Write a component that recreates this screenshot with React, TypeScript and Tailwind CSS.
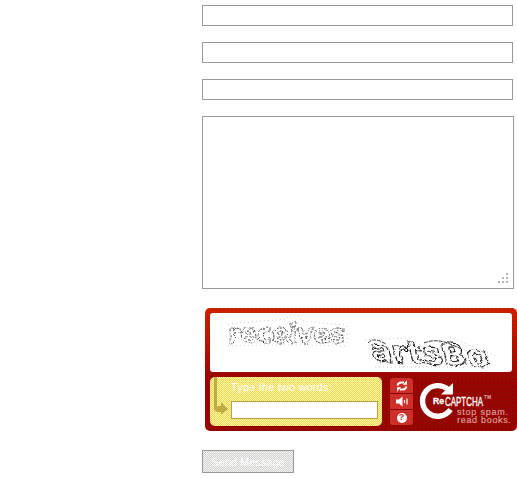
import React from "react";

function Field() {
  return <input aria-label="field" className="block h-[21px] w-[311px] border border-[#999] bg-white outline-none" />;
}

function Words() {
  return (
    <svg className="block h-[59px] w-[302px]" viewBox="0 0 302 59">
      <defs>
        <filter id="rough" x="-10%" y="-20%" width="120%" height="140%">
          <feTurbulence type="fractalNoise" baseFrequency="0.18" numOctaves="2" seed="4" result="n" />
          <feDisplacementMap in="SourceGraphic" in2="n" scale="5" xChannelSelector="R" yChannelSelector="G" />
        </filter>
      </defs>
      <g fill="#fff" fontWeight="bold">
        <g filter="url(#rough)" stroke="#444" strokeWidth="1" strokeDasharray="2 1.3" fontFamily="DejaVu Sans, sans-serif">
          <text x="18" y="30" fontSize="27" textLength="117" lengthAdjust="spacingAndGlyphs">receives</text>
        </g>
        <g filter="url(#rough)" fontFamily="DejaVu Sans, sans-serif" fontSize="30" stroke="#222" strokeWidth="1.1" strokeDasharray="5 0.8">
          <text transform="translate(163 48) rotate(3) skewX(18)" x="0" y="0" textLength="118" lengthAdjust="spacingAndGlyphs">artsBo</text>
        </g>
      </g>
      <path d="M158 30Q162 25 170 28L176 31M214 30Q226 25 240 31L252 36" fill="none" stroke="#333" strokeWidth="1" strokeDasharray="4 1" />
      <g fill="none" stroke="#ccc" strokeDasharray="1 3">
        <path d="M18 11L40 9L76 6L80 2H88L92 8L136 12M18 33Q75 31 135 33M137 13V30M155 27L200 25M240 24L286 43M165 54H280" />
      </g>
    </svg>
  );
}

function Refresh() {
  return (
    <svg className="h-[12px] w-[12px]" viewBox="0 0 12 12">
      <path d="M1.6 5.6Q2 2.4 5.5 2.4H8M10.4 6.4Q10 9.6 6.5 9.6H4" fill="none" stroke="#fff" strokeWidth="2" />
      <path d="M6.8 4.8L11 4.8V0.3ZM5.2 7.2H1V11.7Z" fill="#fff" />
    </svg>
  );
}

function Speaker() {
  return (
    <svg className="h-[11px] w-[14px]" viewBox="0 0 14 11">
      <path d="M1 3.5H4L7.5 0.5V10.5L4 7.5H1Z" fill="#fff" />
      <path d="M9.5 4V7M12 2.5V8.5" stroke="#fff" strokeWidth="1.2" />
    </svg>
  );
}

function Logo() {
  return (
    <svg className="block h-[50px] w-[97px]" viewBox="0 0 97 50">
      <path d="M33 12.5A15.3 15.3 0 1 0 35.5 32.5" fill="none" stroke="#fff" strokeWidth="5.4" />
      <path d="M26 17.5H38V6Z" fill="#fff" />
      <g fill="#fff" fontFamily="Liberation Sans, Arial, sans-serif">
        <text x="18" y="27" fontSize="8.5" fontWeight="bold" stroke="#fff" strokeWidth="0.3" textLength="11" lengthAdjust="spacingAndGlyphs">Re</text>
        <text x="0" y="0" fontSize="13" stroke="#fff" strokeWidth="0.35" textLength="38" lengthAdjust="spacingAndGlyphs" transform="translate(30 29)">CAPTCHA</text>
        <text x="69" y="22" fontSize="4.5" textLength="7">TM</text>
        <g fill="#dc9c98" fontSize="9" stroke="#dc9c98" strokeWidth="0.2">
          <text x="42" y="38" textLength="51">stop spam.</text>
          <text x="42" y="46" textLength="54">read books.</text>
        </g>
      </g>
    </svg>
  );
}

export default function App() {
  return (
    <main className="flex h-[478px] w-[517px] flex-col overflow-hidden bg-white pt-[5px] pl-[202px] font-['Liberation_Sans',Arial,sans-serif]">
      <div className="flex flex-col gap-4">
        <Field />
        <Field />
        <Field />
        <div className="flex h-[173px] w-[312px] items-end justify-end border border-[#999] p-[5px]">
          <svg className="h-[10px] w-[10px]" viewBox="0 0 10 10">
            <path d="M8 0h2v2h-2zM4 4h2v2h-2zM8 4h2v2h-2zM0 8h2v2h-2zM4 8h2v2h-2zM8 8h2v2h-2z" fill="#b4b4b4" />
          </svg>
        </div>
      </div>
      <section className="mt-[19px] ml-[3px] h-[123px] w-[312px] shrink-0 rounded-[5px] bg-[#950000] bg-[conic-gradient(#66330060_0_25%,transparent_0),linear-gradient(#d42000,#9a0000_60%)] bg-[length:4px_4px,100%_100%] p-[5px]">
        <div className="h-[59px] w-[302px] rounded-[3px] bg-white">
          <Words />
        </div>
        <div className="mt-[5px] flex">
          <div className="flex h-[49px] w-[172px] rounded-[5px] bg-[repeating-conic-gradient(#ffff99_0_25%,#f0d060_0_50%)] bg-[length:2px_2px]">
            <svg className="h-[49px] w-[21px] shrink-0" viewBox="0 0 21 49">
              <path d="M4 0H7V29H11V25L18 32L11 38V35H8Q4 35 4 31Z" fill="#c2ac44" />
            </svg>
            <div>
              <div className="h-6 pt-1 text-[11px] leading-[13px] tracking-[0.15px] whitespace-nowrap text-white">Type the two words:</div>
              <input aria-label="Type the two words" className="block h-[18px] w-[147px] border border-[#c0a040] bg-white outline-none" />
            </div>
          </div>
          <div className="mt-px ml-2 flex h-[47px] w-[23px] flex-col divide-y divide-[#850000] overflow-hidden rounded-[3px] bg-[#cc3028]">
            <div className="flex flex-1 items-center justify-center"><Refresh /></div>
            <div className="flex flex-1 items-center justify-center"><Speaker /></div>
            <div className="flex flex-1 items-center justify-center">
              <span className="flex size-[10px] items-center justify-center rounded-full bg-white text-[9px] leading-none font-bold text-[#cc3028]">?</span>
            </div>
          </div>
          <div className="ml-[2px]"><Logo /></div>
        </div>
      </section>
      <button className="mt-[19px] h-[23px] w-[92px] shrink-0 border border-[#999] bg-[repeating-conic-gradient(#d0d0d0_0_25%,#f8f6f0_0_50%)] bg-[length:2px_2px] pt-[2px] text-[11px] whitespace-nowrap text-white">Send Message</button>
    </main>
  );
}
